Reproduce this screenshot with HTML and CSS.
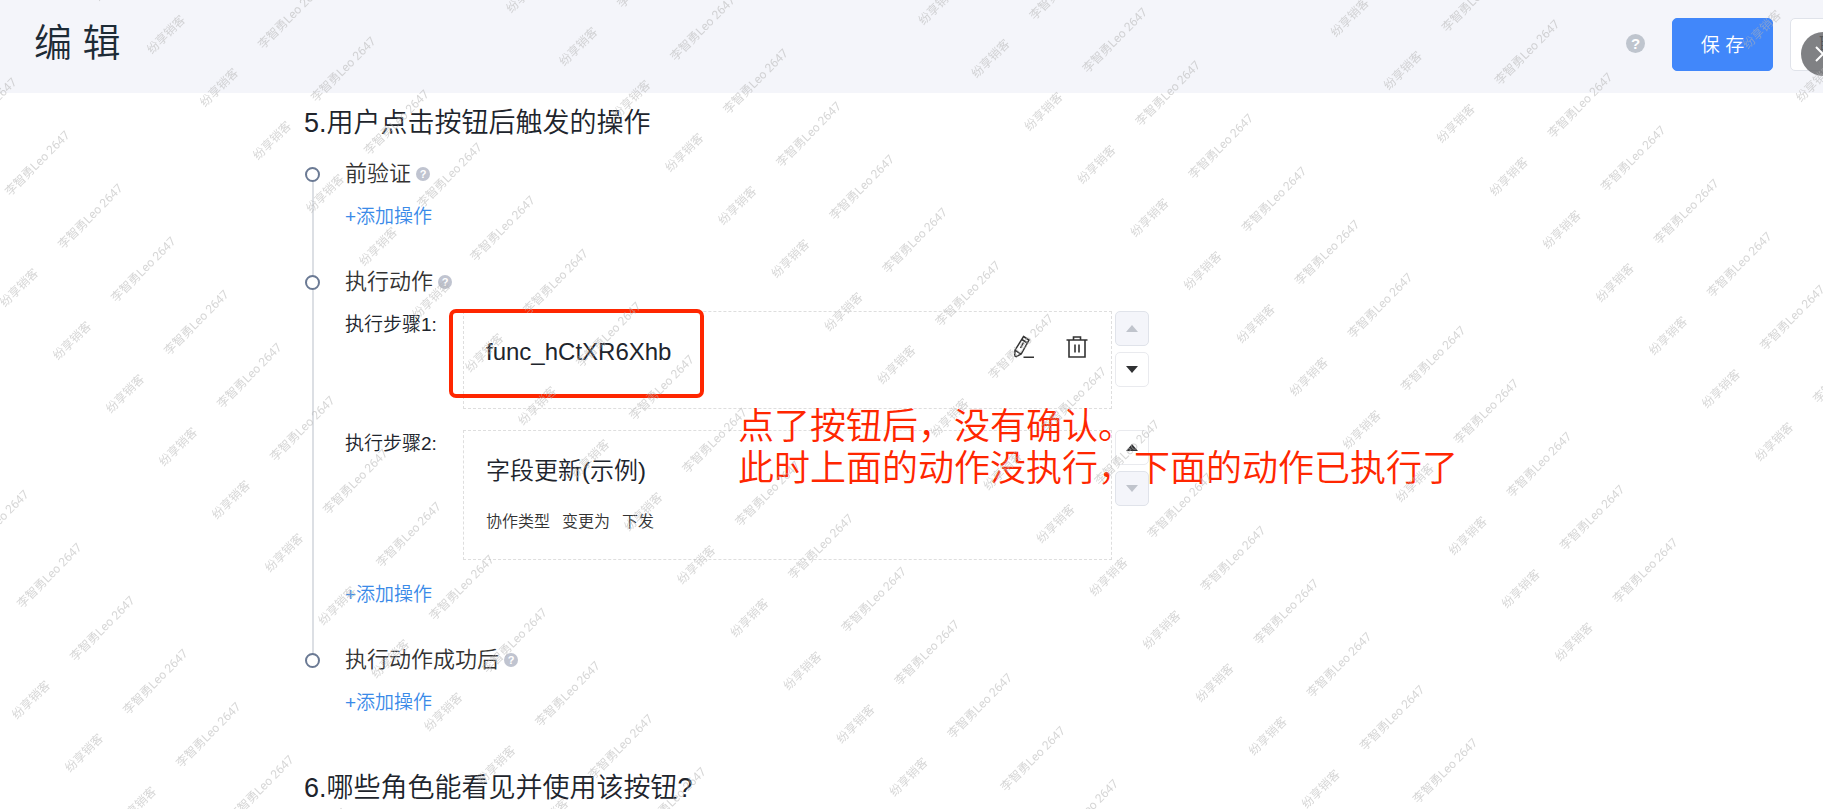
FILE: index.html
```html
<!DOCTYPE html>
<html lang="zh-CN">
<head>
    <meta charset="UTF-8">
    <meta name="viewport" content="width=device-width, initial-scale=1.0">
    <title>编辑</title>
    <link rel="stylesheet" href="styles.css">
</head>
<body>
    <header class="page-header">
        <h1>编 辑</h1>
        <div class="header-actions">
            <span class="help help-lg">?</span>
            <button type="button" class="btn btn-primary">保 存</button>
            <button type="button" class="btn">取 消</button>
        </div>
    </header>

    <button type="button" class="close-btn" aria-label="关闭">
        <svg width="16" height="16" viewBox="0 0 16 16"><path d="M1 1l14 14M15 1L1 15" fill="none" stroke="#fff" stroke-width="2"/></svg>
    </button>

    <main class="content">
        <h2>5.用户点击按钮后触发的操作</h2>

        <ul class="timeline">
            <li>
                <h3>前验证<span class="help">?</span></h3>
                <a href="#" class="add-link">+添加操作</a>
            </li>
            <li>
                <h3>执行动作<span class="help">?</span></h3>
                <div class="step">
                    <div class="step-label">执行步骤1:</div>
                    <div class="card">
                        <div class="card-title">func_hCtXR6Xhb</div>
                        <div class="card-tools">
                            <button type="button" aria-label="编辑">
                                <svg width="22" height="24" viewBox="0 0 22 24" fill="none" stroke="#333" stroke-width="1.5"><path d="M10.500 1.500l5.500 3.500-7.800 14-5 2.700-1.500-.8.300-5.700zM8.800 4.500l5.700 3.500M2 15.200l6 4M7.500 13l3-5.500M10.500 22.300h10.500"/></svg>
                            </button>
                            <button type="button" aria-label="删除">
                                <svg width="22" height="24" viewBox="0 0 22 24" fill="none" stroke="#333" stroke-width="1.600"><path d="M.5 5h21M7.500 4.500V2h7v2.500M3 5v17h16V5M9 9.500v8M13 9.500v8"/></svg>
                            </button>
                        </div>
                        <div class="mark-box"></div>
                        <p class="mark-text">点了按钮后，没有确认。<br>此时上面的动作没执行，下面的动作已执行了</p>
                    </div>
                    <div class="sorter">
                        <button type="button" aria-label="上移" disabled><i class="up"></i></button>
                        <button type="button" aria-label="下移"><i class="down"></i></button>
                    </div>
                </div>
                <div class="step">
                    <div class="step-label">执行步骤2:</div>
                    <div class="card">
                        <div class="card-title">字段更新(示例)</div>
                        <div class="card-desc"><span>协作类型</span><span>变更为</span><span>下发</span></div>
                    </div>
                    <div class="sorter">
                        <button type="button" aria-label="上移"><i class="up"></i></button>
                        <button type="button" aria-label="下移" disabled><i class="down"></i></button>
                    </div>
                </div>
                <a href="#" class="add-link">+添加操作</a>
            </li>
            <li>
                <h3>执行动作成功后<span class="help">?</span></h3>
                <a href="#" class="add-link">+添加操作</a>
            </li>
        </ul>

        <h2>6.哪些角色能看见并使用该按钮?</h2>
    </main>

    <div class="watermark" aria-hidden="true"><div class="watermark-grid" id="watermark"></div></div>

    <script>
        // Fill the rotated grid: 21 rows, 8 marks in each
        const grid = document.getElementById('watermark');
        for (let i = 0; i < 21 * 8; i++) {
            const mark = document.createElement('div');
            mark.innerHTML = '<span>纷享销客</span><span>李智勇Leo 2647</span>';
            grid.appendChild(mark);
        }

        // Hide the marks that fall outside the window
        function trimMarks() {
            grid.querySelectorAll('span').forEach((span) => {
                const box = span.getBoundingClientRect();
                const visible = box.right > 0 && box.bottom > 0 && box.left < innerWidth && box.top < innerHeight;
                span.style.visibility = visible ? '' : 'hidden';
            });
        }
        trimMarks();
        window.addEventListener('resize', trimMarks);
    </script>
</body>
</html>
```
FILE: styles.css
```css
*, *::before, *::after {
    box-sizing: border-box;
}
body {
    margin: 0;
    background: #fff;
    color: #20242c;
    font-family: "Liberation Sans", "Noto Sans CJK SC", sans-serif;
    font-weight: 350;
}
h1, h2, h3, p, ul {
    margin: 0;
    padding: 0;
    font-weight: 350;
}
button {
    font-family: inherit;
    cursor: pointer;
}

/* header */
.page-header {
    display: flex;
    align-items: flex-start;
    justify-content: space-between;
    height: 93px;
    padding: 18px 0 0 34px;
    background: #f4f5fa;
    overflow: hidden;
}
.page-header h1 {
    color: #1d2b36;
    font-size: 38px;
    line-height: 50px;
}
.header-actions {
    display: flex;
    align-items: center;
    margin-right: -68px;
}
.btn {
    width: 101px;
    height: 53px;
    margin-left: 17px;
    padding: 0 0 3px;
    border: 1px solid #e0e3ea;
    border-radius: 5px;
    background: #fff;
    color: #333;
    font-size: 19px;
    font-weight: 350;
}
.btn-primary {
    margin-left: 27px;
    border-color: #4187fa;
    background: #4187fa;
    color: #fff;
}
.close-btn {
    position: fixed;
    top: 32px;
    right: -22px;
    display: flex;
    align-items: center;
    justify-content: center;
    width: 44px;
    height: 44px;
    padding: 0;
    border: 0;
    border-radius: 50%;
    background: rgba(96, 97, 101, .8);
}
.help {
    display: inline-flex;
    align-items: center;
    justify-content: center;
    width: 14px;
    height: 14px;
    margin-left: 5px;
    border-radius: 50%;
    background: #c0c4d0;
    color: #fff;
    font-size: 11px;
    font-weight: bold;
    line-height: 14px;
}
.help-lg {
    width: 19px;
    height: 19px;
    margin-bottom: 2px;
    background: #bfc5ce;
    font-size: 15px;
    line-height: 19px;
}

/* content */
.content {
    max-width: 1149px;
    padding: 11px 0 0 304px;
}
h2 {
    font-size: 27px;
    line-height: 38px;
}
.timeline {
    margin: 17px 0 16px;
    list-style: none;
}
.timeline li {
    position: relative;
    padding: 0 0 36px 41px;
}
.timeline li::before {
    content: "";
    position: absolute;
    top: 8px;
    left: 1px;
    z-index: 1;
    width: 15px;
    height: 15px;
    border: 2px solid #6b7a94;
    border-radius: 50%;
    background: #fff;
}
.timeline li:not(:last-child)::after {
    content: "";
    position: absolute;
    top: 15px;
    bottom: -15px;
    left: 8px;
    width: 2px;
    background: #dcdfe4;
}
.timeline h3 {
    display: flex;
    align-items: center;
    margin-bottom: 14px;
    color: #333;
    font-size: 22px;
    line-height: 30px;
}
.add-link {
    display: block;
    color: #3a8ae8;
    font-size: 19px;
    line-height: 28px;
    text-decoration: none;
}

/* steps */
.step {
    display: flex;
    margin-bottom: 21px;
}
.step-label {
    flex: 0 0 118px;
    font-size: 19px;
    line-height: 28px;
}
.card {
    position: relative;
    flex: 1;
    min-height: 98px;
    padding: 23px 22px;
    border: 1px dashed #dedede;
}
.card-title {
    font-size: 24px;
    line-height: 34px;
}
.card-desc {
    display: flex;
    gap: 12px;
    margin-top: 20px;
    color: #333;
    font-size: 16px;
    line-height: 28px;
}
.card-tools {
    position: absolute;
    top: 23px;
    right: 23px;
    display: flex;
    gap: 31px;
}
.card-tools button {
    display: flex;
    padding: 0;
    border: 0;
    background: none;
}
.sorter {
    display: flex;
    flex-direction: column;
    gap: 6px;
    margin-left: 3px;
}
.sorter button {
    display: flex;
    align-items: center;
    justify-content: center;
    width: 34px;
    height: 35px;
    padding: 0;
    border: 1px solid #e9eaee;
    border-radius: 5px;
    background: #fff;
    color: #303133;
}
.sorter button:disabled {
    border-color: #e0e3ea;
    background: #f4f5fa;
    color: #c0c4cc;
}
.up, .down {
    border: 6px solid transparent;
}
.up {
    border-top: 0;
    border-bottom: 7px solid currentColor;
}
.down {
    border-top: 7px solid currentColor;
    border-bottom: 0;
}

/* red notes on top of the cards */
.mark-box {
    position: absolute;
    top: -3px;
    left: -15px;
    width: 255px;
    height: 89px;
    border: 4px solid #ff2600;
    border-radius: 7px;
}
.mark-text {
    position: absolute;
    top: 94px;
    left: 274px;
    z-index: 2;
    color: #ff2600;
    font-size: 36px;
    line-height: 42px;
    white-space: nowrap;
}

/* watermark */
.watermark {
    position: fixed;
    inset: 0;
    z-index: 10;
    overflow: hidden;
    pointer-events: none;
}
.watermark-grid {
    position: absolute;
    top: 0;
    left: 0;
    display: grid;
    grid-template-columns: repeat(8, 283px);
    grid-auto-rows: 75px;
    transform: rotate(-45deg) translate(-780px, 30px);
    transform-origin: 0 0;
    color: rgba(180, 180, 180, .55);
    font-family: Roboto, "Noto Sans CJK SC", sans-serif;
    font-size: 12px;
    font-weight: 400;
    line-height: 75px;
    white-space: nowrap;
}
.watermark-grid div {
    display: grid;
    grid-template-columns: 82px auto;
    justify-content: start;
}
```
